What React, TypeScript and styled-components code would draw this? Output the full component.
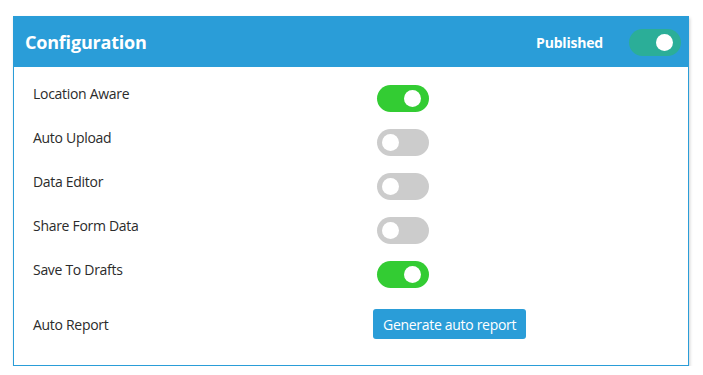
import * as React from 'react'
import styled, { createGlobalStyle } from 'styled-components'

const GlobalStyle = createGlobalStyle`
  body {
    margin: 0;
    background: #ffffff;
    font-family: "Open Sans", "Liberation Sans", sans-serif;
  }
`

const Page = styled.div`
  padding: 16px 15px 0 13px;
  width: 703px;
  box-sizing: border-box;
`

const Card = styled.section`
  width: 676px;
  border: 1px solid #2a9dd8;
  box-sizing: border-box;
  background: #fff;
  box-shadow: 1px 2px 3px rgba(0, 0, 0, 0.18);
`

const Header = styled.header`
  display: flex;
  align-items: center;
  height: 50px;
  padding: 0 7px 0 11px;
  background: #2a9dd8;
  color: #fff;
`

const Title = styled.h1`
  flex: 1;
  margin: 0;
  font-size: 18px;
  font-weight: 700;
  letter-spacing: -0.2px;
`

const PublishedLabel = styled.span`
  font-size: 14px;
  font-weight: 700;
  margin-right: 26px;
  letter-spacing: -0.2px;
`

const Body = styled.div`
  display: flex;
  flex-direction: column;
  padding: 9px 0 13px 19px;
`

const Row = styled.div<{ $tall?: boolean }>`
  display: grid;
  grid-template-columns: 344px 1fr;
  align-items: center;
  height: ${props => (props.$tall ? '56px' : '44px')};
`

const Label = styled.span<{ $raised?: boolean }>`
  font-size: 14px;
  color: #2b2b2b;
  letter-spacing: -0.3px;
  margin-bottom: ${props => (props.$raised ? '9px' : '0')};
`

const Track = styled.span<{ $on: boolean; $color: string }>`
  position: relative;
  display: inline-block;
  vertical-align: middle;
  width: 52px;
  height: 27px;
  border-radius: 14px;
  background: ${props => (props.$on ? props.$color : '#cccccc')};
`

const Knob = styled.span<{ $on: boolean }>`
  position: absolute;
  top: 5px;
  left: ${props => (props.$on ? '27px' : '5px')};
  width: 17px;
  height: 17px;
  border-radius: 50%;
  background: #fff;
`

const ToggleCell = styled.div`
  display: flex;
  align-items: center;
`

const Button = styled.button`
  justify-self: start;
  margin-left: -4px;
  height: 30px;
  padding: 0 10px;
  border: none;
  border-radius: 3px;
  background: #2a9dd8;
  color: #fff;
  font-family: "Open Sans", "Liberation Sans", sans-serif;
  font-size: 14px;
  letter-spacing: -0.3px;
`

const Toggle = ({ on, color = '#33cc33' }: { on: boolean; color?: string }) => (
  <Track $on={on} $color={color}>
    <Knob $on={on} />
  </Track>
)

const settings = [
  { label: 'Location Aware', on: true },
  { label: 'Auto Upload', on: false },
  { label: 'Data Editor', on: false },
  { label: 'Share Form Data', on: false },
  { label: 'Save To Drafts', on: true },
]

export default function App() {
  return (
    <Page>
      <GlobalStyle />
      <Card>
        <Header>
          <Title>Configuration</Title>
          <PublishedLabel>Published</PublishedLabel>
          <Toggle on color="#2bae98" />
        </Header>
        <Body>
          {settings.map(s => (
            <Row key={s.label}>
              <Label $raised>{s.label}</Label>
              <ToggleCell>
                <Toggle on={s.on} />
              </ToggleCell>
            </Row>
          ))}
          <Row $tall>
            <Label>Auto Report</Label>
            <Button>Generate auto report</Button>
          </Row>
        </Body>
      </Card>
    </Page>
  )
}
